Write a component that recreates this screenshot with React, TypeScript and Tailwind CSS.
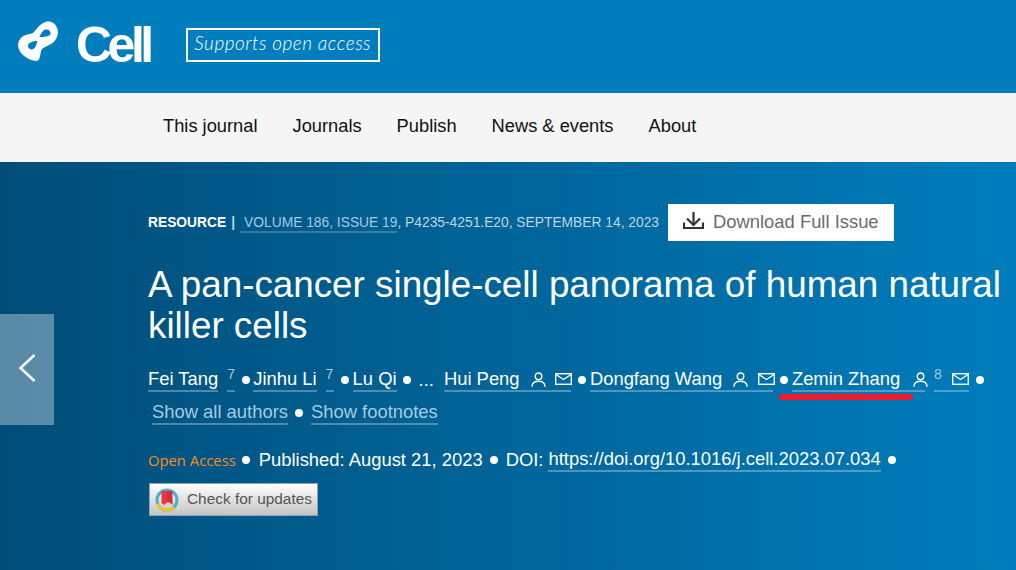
import type { ReactNode } from "react";

const SANS = "font-['Liberation_Sans',Arial,sans-serif]";

function Dot({ className = "" }: { className?: string }) {
  return <span className={`h-[8px] w-[8px] shrink-0 rounded-full bg-white ${className}`} />;
}

function UserIcon({ className = "" }: { className?: string }) {
  return (
    <svg width="15" height="15" viewBox="0 0 15 15" fill="none" stroke="#fff" strokeWidth="1.4" className={`shrink-0 ${className}`}>
      <circle cx="7.5" cy="4.300" r="3.300" />
      <path d="M1 14.300c.2-3 2.900-5 6.500-5s6.300 2 6.500 5" strokeLinecap="round" />
    </svg>
  );
}

function MailIcon({ className = "" }: { className?: string }) {
  return (
    <svg width="17" height="12" viewBox="0 0 17 12" fill="none" stroke="#fff" strokeWidth="1.4" className={`shrink-0 ${className}`}>
      <rect x="0.7" y="0.7" width="15.600" height="10.600" />
      <path d="M1 1.500l7.500 5L16 1.500" />
    </svg>
  );
}

function DownloadIcon() {
  return (
    <svg width="21" height="17" viewBox="0 0 21 17" fill="none" stroke="#333" strokeWidth="2.200" className="mb-[2px] shrink-0">
      <path d="M10.500 0v12.500" />
      <path d="M4 6.500l6.500 6.500L17 6.500" />
      <path d="M1 10.500V16h19v-5.500" />
    </svg>
  );
}

function CellMark() {
  return (
    <svg width="41" height="41" viewBox="0 0 41 41" fill="#fff" fillRule="evenodd" className="shrink-0">
      <path d="M25 2c5-3 12-2 14.500 6 1.500 6-1.500 12-6.500 15-4 2.500-8 3-9.500 6-1.500 3-1 9-3.500 10.500C17 41 8 38 3 32c-4-5-4-12 1-16 4-3.500 9-2 12-5 2-2 5-7 9-9zM28.500 8.500c-3 0-5 2.500-7 7.500 4.500 0 10.500-.5 11-3 .5-2.500-1.500-4.500-4-4.500zM19.500 20c-5.500 0-9.500 2-9.500 5s3.500 4 5.500 3 3-4.500 4-8z" />
    </svg>
  );
}

function CrossmarkIcon() {
  return (
    <svg width="24" height="24" viewBox="0 0 24 24" fill="none" className="shrink-0">
      <circle cx="12" cy="12" r="10" stroke="#45b2c9" strokeWidth="3" />
      <path d="M2.600 15.500A10 10 0 0 0 19 19.100" stroke="#f4c430" strokeWidth="3" />
      <path d="M6.500 3h5.500v11.500L9.300 17l-2.800-2z" fill="#f0343f" />
      <path d="M12 3h5.500v14l-3-2.500L12 14.500z" fill="#d42c3a" />
    </svg>
  );
}

function AuthorLink({ children, className = "" }: { children: ReactNode; className?: string }) {
  return (
    <a className={`flex h-[24px] shrink-0 items-center whitespace-nowrap border-b-2 border-white/30 ${className}`}>{children}</a>
  );
}

function Sup({ children, className = "" }: { children: ReactNode; className?: string }) {
  return (
    <span className={`flex h-[24px] shrink-0 items-start border-b-2 border-white/30 text-[14px] leading-[12px] text-[#a5cbe0] ${className}`}>
      {children}
    </span>
  );
}

export default function App() {
  return (
    <div className={`flex h-[570px] w-[1016px] flex-col overflow-hidden ${SANS}`}>
      <header className="flex h-[93px] items-start bg-[#007dbc] pl-[18px] pt-[21px] text-white">
        <CellMark />
        <span className="ml-[17px] mt-[-4px] text-[50px] font-bold leading-[56px] tracking-[-4.500px]">
          Cell
        </span>
        <span className="ml-[36px] mt-[7px] flex h-[34px] w-[194px] items-center justify-center whitespace-nowrap border-2 border-white pb-[5px] font-['Lato',sans-serif] text-[19px] font-light italic leading-none tracking-[0.500px]">
          Supports open access
        </span>
      </header>

      <nav className="flex h-[69px] items-center gap-[35px] bg-[#f5f5f5] pb-[3px] pl-[163px] text-[18.300px] text-[#111]">
        <a>This journal</a>
        <a>Journals</a>
        <a>Publish</a>
        <a>News &amp; events</a>
        <a>About</a>
      </nav>

      <main className="relative flex-1 bg-gradient-to-r from-[#004d78] to-[#007dbc] pl-[148px] pt-[42px] text-white">
        <button className="absolute left-0 top-[152px] flex h-[111px] w-[54px] items-center justify-center bg-white/35">
          <svg width="18" height="30" viewBox="0 0 18 30" fill="none" stroke="#fff" strokeWidth="2.500" className="mb-[3px]">
            <path d="M16.500 2L2.500 15l14 13" />
          </svg>
        </button>

        <div className="flex h-[37px] items-center whitespace-nowrap text-[13.800px] text-[#bcd6e6]">
          <div className="mt-[1px] flex items-start leading-[17px]">
            <span className="font-bold text-white">RESOURCE</span>
            <span className="ml-[5px] font-bold">|</span>
            <a className="ml-[5px] border-b-2 border-white/20 pl-[4px] text-[#a5cbe0]">VOLUME 186, ISSUE 19</a>
            <span>, P4235-4251.E20, SEPTEMBER 14, 2023</span>
          </div>
          <button className="ml-[9px] flex h-[37px] w-[226px] items-center gap-[9px] bg-white pb-[2px] pl-[15px] text-[18.400px] text-[#6b6b6b]">
            <DownloadIcon />
            Download Full Issue
          </button>
        </div>

        <h1 className="mt-[23px] w-[860px] text-[36.800px] font-normal leading-[41px]">
          A pan-cancer single-cell panorama of human natural killer cells
        </h1>

        <div className="mt-[21px] flex h-[26px] items-center text-[18.400px]">
          <AuthorLink>Fei Tang</AuthorLink>
          <Sup className="ml-[9px] w-[8px]">7</Sup>
          <Dot className="ml-[7px]" />
          <AuthorLink className="ml-[3px]">Jinhu Li</AuthorLink>
          <Sup className="ml-[9px] w-[8px]">7</Sup>
          <Dot className="ml-[7px]" />
          <AuthorLink className="ml-[4px]">Lu Qi</AuthorLink>
          <Dot className="ml-[6px]" />
          <span className="ml-[8px]">...</span>
          <AuthorLink className="ml-[10px] w-[127px]">
            Hui Peng
            <UserIcon className="ml-[11px]" />
            <MailIcon className="ml-[9px]" />
          </AuthorLink>
          <Dot className="ml-[7px]" />
          <AuthorLink className="ml-[4px] w-[183px]">
            Dongfang Wang
            <UserIcon className="ml-[11px]" />
            <MailIcon className="ml-[10px]" />
          </AuthorLink>
          <Dot className="ml-[7px]" />
          <AuthorLink className="relative ml-[4px] w-[133px]">
            Zemin Zhang
            <UserIcon className="ml-[13px]" />
            <span className="absolute left-[-13px] top-[26px] h-[6px] w-[134px] rounded-full bg-[#ed1c2e]" />
          </AuthorLink>
          <Sup className="ml-[9px] w-[8px]">8</Sup>
          <AuthorLink className="w-[27px] justify-end">
            <MailIcon />
          </AuthorLink>
          <Dot className="ml-[7px]" />
        </div>

        <div className="ml-[4px] mt-[7px] flex h-[26px] items-center text-[18.400px] text-[#a5cbe0]">
          <AuthorLink>Show all authors</AuthorLink>
          <Dot className="ml-[7px]" />
          <AuthorLink className="ml-[8px]">Show footnotes</AuthorLink>
        </div>

        <div className="mt-[21px] flex h-[26px] items-center whitespace-nowrap text-[18.400px]">
          <span className="font-['Open_Sans',sans-serif] text-[14.800px] text-[#f98a1c]">Open Access</span>
          <Dot className="ml-[6px]" />
          <span className="ml-[9px]">Published: August 21, 2023</span>
          <Dot className="ml-[7px]" />
          <span className="ml-[8px]">DOI:</span>
          <AuthorLink className="ml-[5px]">https://doi.org/10.1016/j.cell.2023.07.034</AuthorLink>
          <Dot className="ml-[7px]" />
        </div>

        <button className="ml-px mt-[10px] flex h-[33px] w-[169px] items-center gap-[8px] border border-[#8fa3b0] bg-gradient-to-b from-white to-[#c4c4c4] pl-[5px] text-[15.400px] text-[#555]">
          <CrossmarkIcon />
          <span className="mb-[2px]">Check for updates</span>
        </button>
      </main>
    </div>
  );
}
